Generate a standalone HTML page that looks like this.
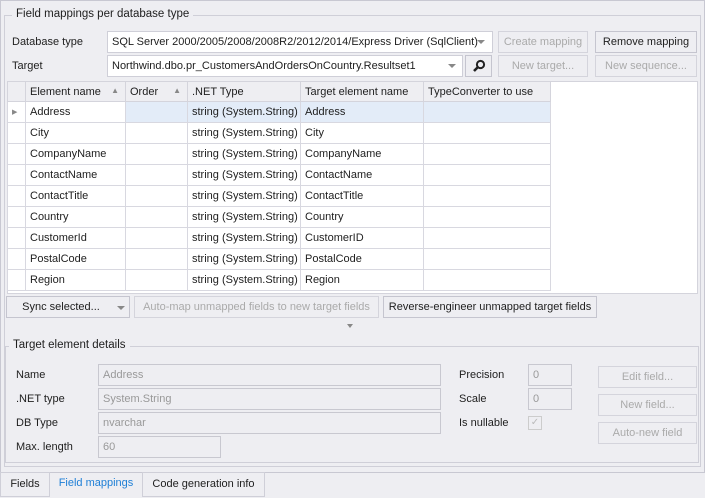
<!DOCTYPE html>
<html><head><style>
*{box-sizing:border-box;margin:0;padding:0}
body{width:705px;height:498px;background:#eeeef2;font-family:"Liberation Sans",sans-serif;font-size:11px;color:#1e1e1e;position:relative;overflow:hidden}
.a{position:absolute;white-space:nowrap}
.box{position:absolute;border:1px solid #cfcfd8}
.lbl{position:absolute;background:#eeeef2;padding:0 4px;font-size:11.5px}
.in{position:absolute;background:#fff;border:1px solid #cfcfd8;height:22px;line-height:20px;padding-left:4px;white-space:nowrap;overflow:hidden}
.dis{background:#eeeef2;color:#999;border-color:#c8c8d0}
.btn{position:absolute;border:1px solid #d4d4dc;height:22px;line-height:20px;text-align:center;color:#aaa;white-space:nowrap;overflow:hidden}
.btn.en{color:#1e1e1e;border-color:#c5c5cf}
.dd{position:absolute;right:5px;top:8px;width:0;height:0;border-left:4px solid transparent;border-right:4px solid transparent;border-top:4px solid #888;background:#fff}
table{border-collapse:collapse;table-layout:fixed;width:543px}
td{border:1px solid #d8d8e0;height:21px;padding-left:4px;white-space:nowrap;overflow:hidden;background:#fff}
tr.h td{background:#eeeef2;border-color:#d4d4dc;height:20px}
tr.s td{background:#e3ecf8}
</style></head><body>
<div class="box" style="left:0;top:0;width:705px;height:473px;border-color:#c8c8d2"></div>
<div class="box" style="left:4px;top:15px;width:697px;height:452px"></div>
<div class="lbl" style="left:12px;top:8px">Field mappings per database type</div>

<div class="a" style="left:12px;top:36px">Database type</div>
<div class="in" style="left:107px;top:31px;width:386px;padding-right:20px">SQL Server 2000/2005/2008/2008R2/2012/2014/Express Driver (SqlClient)</div>
<div class="a" style="left:477px;top:40px;border-left:4px solid transparent;border-right:4px solid transparent;border-top:4px solid #888"></div>
<div class="btn" style="left:498px;top:31px;width:90px">Create mapping</div>
<div class="btn en" style="left:595px;top:31px;width:102px">Remove mapping</div>

<div class="a" style="left:12px;top:60px">Target</div>
<div class="in" style="left:107px;top:55px;width:356px">Northwind.dbo.pr_CustomersAndOrdersOnCountry.Resultset1</div>
<div class="a" style="left:448px;top:64px;border-left:4px solid transparent;border-right:4px solid transparent;border-top:4px solid #888"></div>
<div class="btn en" style="left:465px;top:55px;width:27px;background:#eeeef2"><svg width="14" height="14" viewBox="0 0 14 14" style="margin-top:3px"><circle cx="8.5" cy="5.5" r="3.6" fill="none" stroke="#222" stroke-width="2"/><path d="M6 8L2 12" stroke="#222" stroke-width="2.6"/></svg></div>
<div class="btn" style="left:498px;top:55px;width:90px">New target...</div>
<div class="btn" style="left:595px;top:55px;width:102px">New sequence...</div>

<div class="a" style="left:7px;top:81px;width:691px;height:213px;background:#fff;border:1px solid #d4d4dc"></div>
<table class="a" style="left:7px;top:81px">
<colgroup><col style="width:18px"><col style="width:100px"><col style="width:62px"><col style="width:113px"><col style="width:123px"><col style="width:127px"></colgroup>
<tr class="h"><td></td><td>Element name <span style="float:right;margin-right:6px;color:#888;font-size:8px">▲</span></td><td>Order <span style="float:right;margin-right:6px;color:#888;font-size:8px">▲</span></td><td>.NET Type</td><td>Target element name</td><td>TypeConverter to use</td></tr>
<tr class="s"><td style="background:#fff;color:#888;font-size:7px">▶</td><td style="background:#fff">Address</td><td></td><td>string (System.String)</td><td>Address</td><td></td></tr>
<tr><td></td><td>City</td><td></td><td>string (System.String)</td><td>City</td><td></td></tr>
<tr><td></td><td>CompanyName</td><td></td><td>string (System.String)</td><td>CompanyName</td><td></td></tr>
<tr><td></td><td>ContactName</td><td></td><td>string (System.String)</td><td>ContactName</td><td></td></tr>
<tr><td></td><td>ContactTitle</td><td></td><td>string (System.String)</td><td>ContactTitle</td><td></td></tr>
<tr><td></td><td>Country</td><td></td><td>string (System.String)</td><td>Country</td><td></td></tr>
<tr><td></td><td>CustomerId</td><td></td><td>string (System.String)</td><td>CustomerID</td><td></td></tr>
<tr><td></td><td>PostalCode</td><td></td><td>string (System.String)</td><td>PostalCode</td><td></td></tr>
<tr><td></td><td>Region</td><td></td><td>string (System.String)</td><td>Region</td><td></td></tr>
</table>

<div class="btn en" style="left:6px;top:296px;width:124px;padding-right:14px">Sync selected...</div>
<div class="a" style="left:117px;top:306px;border-left:4px solid transparent;border-right:4px solid transparent;border-top:4px solid #888"></div>
<div class="btn" style="left:134px;top:296px;width:245px">Auto-map unmapped fields to new target fields</div>
<div class="btn en" style="left:383px;top:296px;width:214px">Reverse-engineer unmapped target fields</div>
<div class="a" style="left:347px;top:324px;border-left:3px solid transparent;border-right:3px solid transparent;border-top:4px solid #888"></div>

<div class="box" style="left:5px;top:346px;width:694px;height:117px"></div>
<div class="lbl" style="left:9px;top:339px">Target element details</div>

<div class="a" style="left:16px;top:369px">Name</div>
<div class="in dis" style="left:98px;top:364px;width:343px">Address</div>
<div class="a" style="left:16px;top:393px">.NET type</div>
<div class="in dis" style="left:98px;top:388px;width:343px">System.String</div>
<div class="a" style="left:16px;top:417px">DB Type</div>
<div class="in dis" style="left:98px;top:412px;width:343px">nvarchar</div>
<div class="a" style="left:16px;top:441px">Max. length</div>
<div class="in dis" style="left:98px;top:436px;width:123px">60</div>

<div class="a" style="left:459px;top:369px">Precision</div>
<div class="in dis" style="left:528px;top:364px;width:44px">0</div>
<div class="a" style="left:459px;top:393px">Scale</div>
<div class="in dis" style="left:528px;top:388px;width:44px">0</div>
<div class="a" style="left:459px;top:417px">Is nullable</div>
<div class="a" style="left:528px;top:416px;width:14px;height:14px;border:1px solid #ccc;color:#bbb;font-size:10px;line-height:12px;text-align:center">✓</div>

<div class="btn" style="left:598px;top:366px;width:99px">Edit field...</div>
<div class="btn" style="left:598px;top:394px;width:99px">New field...</div>
<div class="btn" style="left:598px;top:422px;width:99px">Auto-new field</div>

<div class="a" style="left:0;top:472px;width:50px;height:25px;border:1px solid #cfcfd8;line-height:23px;text-align:center">Fields</div>
<div class="a" style="left:49px;top:472px;width:94px;height:25px;line-height:23px;text-align:center;color:#1e7fd6">Field mappings</div>
<div class="a" style="left:142px;top:472px;width:123px;height:25px;border:1px solid #cfcfd8;line-height:23px;text-align:center">Code generation info</div>
</body></html>
